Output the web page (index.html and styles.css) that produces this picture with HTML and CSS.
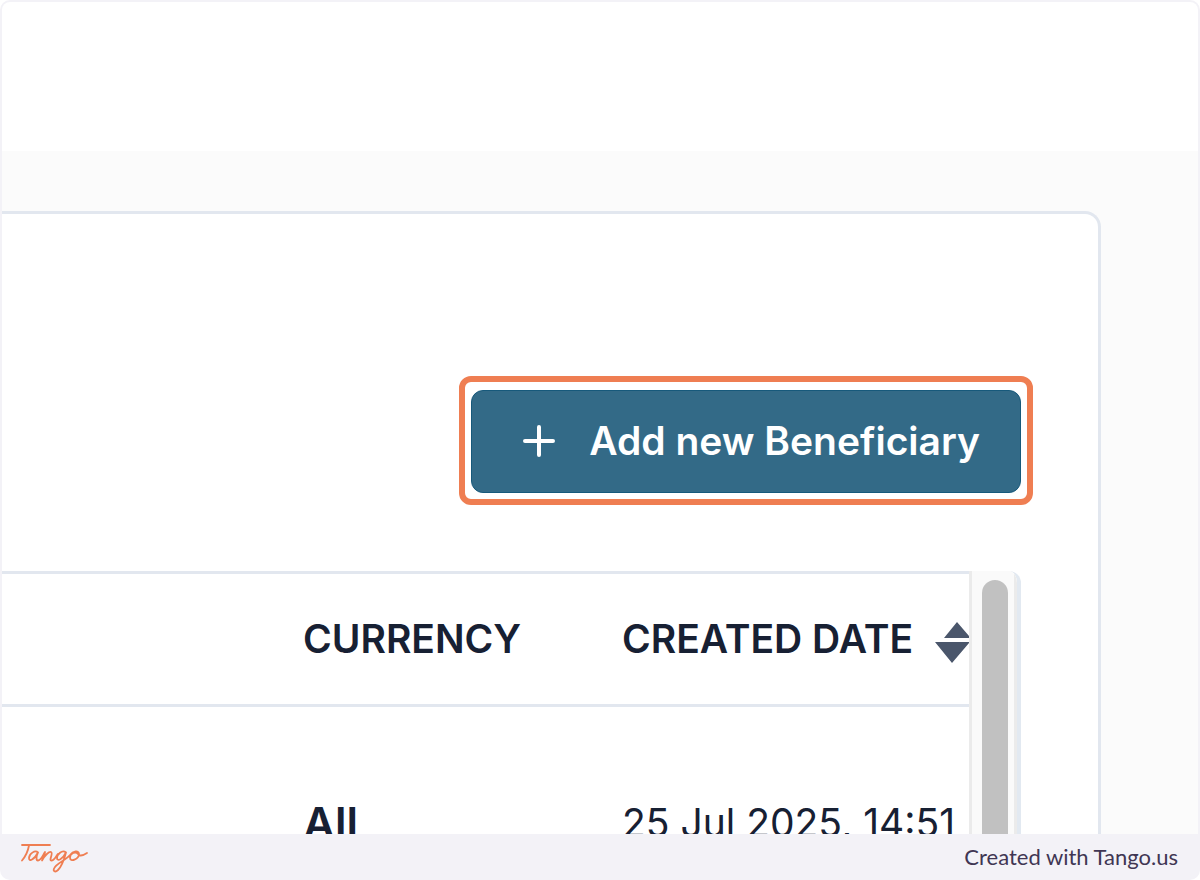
FILE: index.html
```html
<!DOCTYPE html>
<html lang="en">
<head>
<meta charset="utf-8">
<title>Beneficiaries</title>
<link rel="stylesheet" href="styles.css">
</head>
<body>
<div class="frame">
  <main class="shot">
    <div class="topbar"></div>
    <div class="page">
      <section class="card">
        <div class="actions">
          <div class="highlight">
            <button class="add" type="button">
              <svg class="plus" viewBox="0 0 32 32" aria-hidden="true"><path d="M16 2v28M2 16h28"/></svg>
              Add new Beneficiary
            </button>
          </div>
        </div>
        <div class="panel">
          <table class="list">
            <colgroup><col><col class="col-currency"><col class="col-date"></colgroup>
            <thead>
              <tr>
                <th></th>
                <th scope="col">CURRENCY</th>
                <th scope="col">
                  <div class="sortable">CREATED DATE
                    <svg class="sort" viewBox="0 0 34 42" aria-hidden="true"><path d="M22 0L34 14V16H9zM0 20H34V21L17 41z"/></svg>
                  </div>
                </th>
              </tr>
            </thead>
            <tbody>
              <tr>
                <td></td>
                <td class="currency">All</td>
                <td>25 Jul 2025, 14:51</td>
              </tr>
            </tbody>
          </table>
          <div class="track"><div class="thumb"></div></div>
        </div>
      </section>
    </div>
  </main>
  <footer class="footer">
    <svg class="logo" viewBox="0 0 68 34" role="img" aria-label="Tango"><path d="M2 5H30M9 5.500C8 11 5 17 2 20.500M18 12.500C15 9.500 9 14 9 18C9 22 14 20 18 12.500C16 17 16 20.500 18 20.500C21 20.500 23 15 25 12C25 15 23 18 22 20.500C25 15 29 11.500 31 12C33.500 13 29 20 31 20.500C34 21 36 16 38 14M46 12.500C42 9 37 15 37 18C37 22 43 19 46 12.500C44 20 41 27 38 30C35 33 32 31 35 27C38 23 46 20 50 15C53 11 59 10 59 14C59 19 50 23 50 17.500C50 13 56 11 58 14C60 17 64 15 67 13"/></svg>
    <span>Created with Tango.us</span>
  </footer>
</div>
</body>
</html>
```
FILE: styles.css
```css
* {
  box-sizing: border-box;
}

body {
  margin: 0;
  background: #fff;
  color: #172033;
  font-family: Inter, "Liberation Sans", sans-serif;
}

.frame {
  display: flex;
  flex-direction: column;
  height: 100vh;
  overflow: hidden;
  border-radius: 10px;
  background: #f3f2f7;
}

.shot {
  display: flex;
  flex: 1;
  flex-direction: column;
  min-height: 0;
  margin: 2px 2px 0;
  overflow: hidden;
  border-radius: 8px 8px 0 0;
  background: #fff;
}

.topbar {
  flex: none;
  height: 149px;
}

.page {
  display: flex;
  flex: 1;
  min-height: 0;
  padding: 60px 97px 0 0;
  background: #fbfbfb;
}

.card {
  display: flex;
  flex: 1;
  flex-direction: column;
  min-width: 0;
  padding-top: 162px;
  border: 3px solid #e2e7ef;
  border-width: 3px 3px 0 0;
  border-radius: 0 16px 0 0;
  background: #fff;
}

.actions {
  display: flex;
  flex: none;
  justify-content: flex-end;
  padding-right: 65px;
}

.highlight {
  padding: 8px 6px 6px;
  border: 6px solid #ef7e52;
  border-radius: 12px;
}

.add {
  display: flex;
  align-items: center;
  gap: 34px;
  height: 103px;
  padding: 0 40px 2px 51px;
  border: 1px solid #17597b;
  border-radius: 12px;
  background: #336a87;
  color: #fff;
  font: 600 39px/48px Inter, "Liberation Sans", sans-serif;
}

.plus {
  width: 32px;
  height: 32px;
  fill: none;
  stroke: #fff;
  stroke-width: 4;
  stroke-linecap: round;
}

.panel {
  display: flex;
  flex: 1;
  min-height: 0;
  margin: 66px 77px 0 0;
  overflow: hidden;
  border-right: 4px solid #e2e9f1;
  border-radius: 0 12px 0 0;
}

.list {
  flex: 1;
  align-self: flex-start;
  min-width: 0;
  border-top: 3px solid #e2e7ef;
  border-spacing: 0;
  table-layout: fixed;
}

.col-currency {
  width: 319px;
}

.col-date {
  width: 347px;
}

.list th,
.list td {
  padding: 0;
  text-align: left;
  white-space: nowrap;
}

.list th {
  height: 133px;
  padding-bottom: 2px;
  border-bottom: 3px solid #e2e7ef;
  font-size: 39px;
  font-weight: 600;
}

.list td {
  padding-top: 92px;
  font-size: 39px;
  line-height: 48px;
}

.list .currency {
  font-size: 44px;
  font-weight: 600;
}

.sortable {
  display: flex;
  align-items: center;
  justify-content: space-between;
}

.sort {
  flex: none;
  width: 34px;
  height: 42px;
  margin-top: 10px;
  fill: #4a566b;
}

.track {
  flex: none;
  width: 48px;
  padding: 9px 7px 0 10px;
  border: 3px solid #ebebeb;
  border-width: 0 3px;
  background: #fafafa;
}

.thumb {
  width: 26px;
  height: 100%;
  border-radius: 13px 13px 0 0;
  background: #c1c1c1;
}

.footer {
  display: flex;
  flex: none;
  align-items: center;
  justify-content: space-between;
  height: 46px;
  padding: 0 22px 0 20px;
  color: #403653;
  font: 22px/28px Lato, sans-serif;
}

.logo {
  width: 68px;
  height: 34px;
  fill: none;
  stroke: #ef7e52;
  stroke-width: 1.8;
  stroke-linecap: round;
  stroke-linejoin: round;
}
```
